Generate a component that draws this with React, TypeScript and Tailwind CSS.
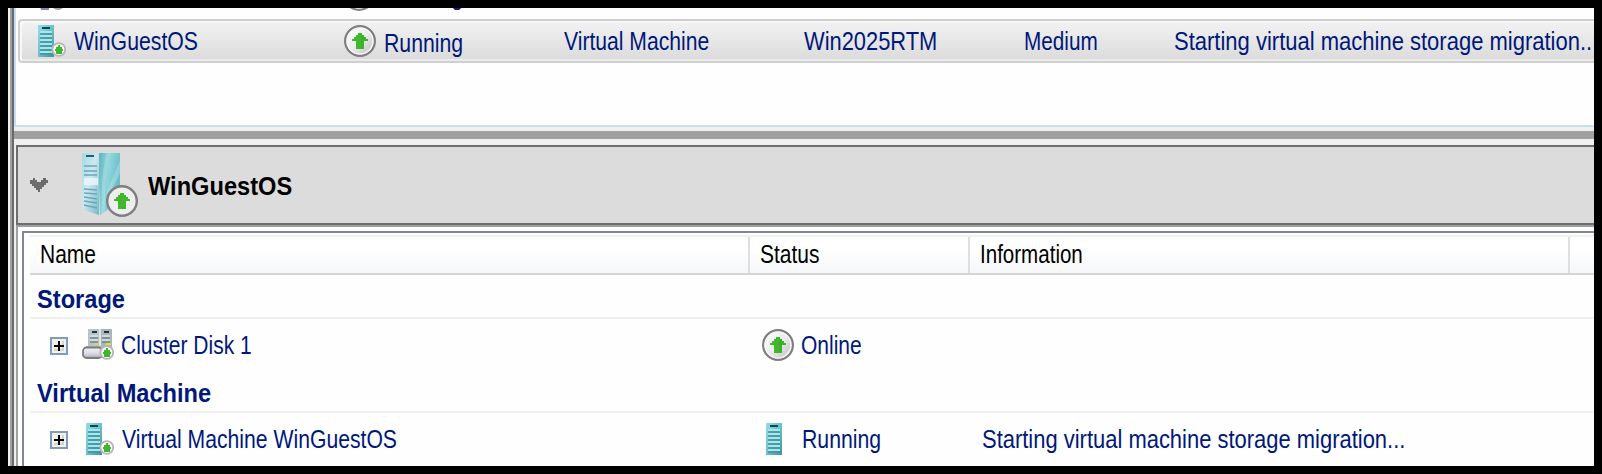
import type { ReactNode } from "react";

function Label({ children, className = "" }: { children: ReactNode; className?: string }) {
  return (
    <span className={`block origin-left whitespace-nowrap text-[25px] leading-[28px] ${className}`}>
      {children}
    </span>
  );
}

function UpBadge({ className = "" }: { className?: string }) {
  return (
    <svg viewBox="0 0 32 32" className={`size-8 shrink-0 ${className}`}>
      <defs>
        <linearGradient id="badge" x1="0" y1="0" x2="1" y2="1">
          <stop offset="0" stopColor="#ffffff" />
          <stop offset="0.5" stopColor="#ececec" />
          <stop offset="0.75" stopColor="#d2d2d2" />
          <stop offset="1" stopColor="#f4f4f4" />
        </linearGradient>
      </defs>
      <circle cx="16" cy="16" r="14.8" fill="url(#badge)" stroke="#7f7f7f" strokeWidth="2.4" />
      <circle cx="16" cy="16" r="13" fill="none" stroke="#f6f6f6" strokeWidth="1.4" />
      <path d="M14 8h4v2h2v2h2v2h2v2h-4v8h-8v-8H8v-2h2v-2h2v-2h2z" fill="#3fb92b" />
      <path d="M18 8v2h2v2h2v2h2v2h-4v8h-3V10z" fill="#35ae22" opacity="0.6" />
    </svg>
  );
}

function MiniBadge() {
  return (
    <g>
      <circle cx="20.8" cy="24.5" r="6.4" fill="#fcfcfc" stroke="#b6b6b6" strokeWidth="1.8" />
      <path d="M20 20h2v2h2v2h1v2h-1v3h-6v-3h-1v-2h1v-2h2z" fill="#3db82a" />
    </g>
  );
}

function ServerIcon({ badge = false }: { badge?: boolean }) {
  return (
    <svg viewBox="0 0 28 32" className="h-8 w-7 shrink-0">
      <defs>
        <linearGradient id="server" x1="0" y1="0" x2="1" y2="1">
          <stop offset="0" stopColor="#93dfe6" />
          <stop offset="0.55" stopColor="#68bdc7" />
          <stop offset="1" stopColor="#3c929e" />
        </linearGradient>
      </defs>
      <rect width="16" height="32" fill="url(#server)" />
      <rect x="4" y="2" width="8" height="2" fill="#10464f" />
      <path d="M2 7h12M2 11h12M2 15h12M2 19h12M2 23h12M2 27h12" stroke="#a9e6ea" strokeWidth="2" />
      <path d="M2 9h12M2 13h12M2 17h12M2 21h12M2 25h12M2 29h12" stroke="#3f93a0" strokeWidth="1.4" />
      {badge && <MiniBadge />}
    </svg>
  );
}

function DiskIcon() {
  return (
    <svg viewBox="0 0 32 32" className="size-8 shrink-0">
      <defs>
        <linearGradient id="drive" x1="0" y1="0" x2="0" y2="1">
          <stop offset="0" stopColor="#f4f4f8" />
          <stop offset="0.6" stopColor="#d9d9e3" />
          <stop offset="1" stopColor="#a9a9b2" />
        </linearGradient>
      </defs>
      <rect x="6" width="12" height="18" fill="#b9c4c9" />
      <rect x="18" width="12" height="18" fill="#a9b5ba" />
      <path d="M18 0v18" stroke="#dfe6e8" strokeWidth="2" />
      <path d="M10 3h5M22 3h5" stroke="#1d3540" strokeWidth="2" />
      <path d="M8 9h8M8 13h8M20 9h8M20 13h8" stroke="#75848b" strokeWidth="1.6" />
      <path d="M8 7h8M8 11h8M20 7h8M20 11h8" stroke="#dbe4e7" strokeWidth="1.6" />
      <path d="M13 15h3M24 15h5" stroke="#d4e43c" strokeWidth="2" />
      <path d="M4 17h24v12H4z" fill="#b5b5ba" />
      <rect x="1" y="18.5" width="19" height="10.5" rx="3.5" fill="url(#drive)" stroke="#7c7c81" strokeWidth="1.8" />
      <g transform="translate(4 -1)"><MiniBadge /></g>
    </svg>
  );
}

function BigServerIcon() {
  return (
    <svg viewBox="0 0 56 64" className="h-16 w-14 shrink-0">
      <defs>
        <linearGradient id="front" x1="0" y1="0" x2="1" y2="1">
          <stop offset="0" stopColor="#9fdce3" />
          <stop offset="0.45" stopColor="#cfe8ef" />
          <stop offset="1" stopColor="#70b9c7" />
        </linearGradient>
        <linearGradient id="side" x1="0" y1="0" x2="1" y2="0.4">
          <stop offset="0" stopColor="#5fb0bb" />
          <stop offset="0.5" stopColor="#8fd5dc" />
          <stop offset="1" stopColor="#68bcc7" />
        </linearGradient>
      </defs>
      <path d="M16 0h22v48L18 62z" fill="url(#side)" />
      <path d="M24 0h4l-5 30v28l-3 2V28z" fill="#b5e8ec" opacity="0.4" />
      <path d="M38 8L25 38v8l13-26z" fill="#c6eef1" opacity="0.35" />
      <path d="M0 0h17v62L0 56z" fill="url(#front)" />
      <path d="M4 3h8" stroke="#1d6370" strokeWidth="2" />
      <path d="M2 13h13M2 18h13M2 22h13M2 36l13 1M2 40l13 1M2 44l13 2M2 48l13 2M2 52l13 3" stroke="#6ba6bb" strokeWidth="1.6" />
      <path d="M2 25h14v7H2z" fill="#edf8fc" opacity="0.8" />
      <g transform="translate(24 32)">
        <circle cx="16" cy="16" r="14.8" fill="#eeeeef" stroke="#7f7f7f" strokeWidth="2.4" />
        <path d="M14 8h4v2h2v2h2v2h2v2h-4v8h-8v-8H8v-2h2v-2h2v-2h2z" fill="#3fb92b" />
      </g>
    </svg>
  );
}

function Expander() {
  return (
    <svg viewBox="0 0 18 18" className="size-[18px] shrink-0" shapeRendering="crispEdges">
      <rect x="1" y="1" width="16" height="16" fill="#f3f1ec" stroke="#7f9db9" strokeWidth="2" />
      <path d="M14 4v10H4v-2h8V4z" fill="#d8d3c8" />
      <path d="M4 9h10M9 4v10" stroke="#000" strokeWidth="2" />
    </svg>
  );
}

function ResourceHeader({ title }: { title: string }) {
  return (
    <div className="ml-[6px] h-full border-b-2 border-[#f0f0f0] pl-[7px] pt-[10px]">
      <Label className="scale-x-[0.945] font-bold text-[#00187a]">{title}</Label>
    </div>
  );
}

export default function App() {
  return (
    <div className="h-[474px] w-[1602px] overflow-hidden bg-black p-2 font-['Liberation_Sans',sans-serif] text-[#00187a]">
      <div className="flex h-[458px] w-[1586px] overflow-hidden bg-white">
        <div className="w-[6px] shrink-0 border-l-2 border-[#f0f0f0] bg-[linear-gradient(90deg,#a0a0a0_50%,#696969_50%)]" />
        <div className="flex w-[1580px] shrink-0 flex-col bg-[#f0f0f0]">
          <div className="flex h-[119px] shrink-0 flex-col border-b-2 border-l-2 border-[#c7e0f1] bg-[#fefefe] pl-[2px]">
            <div className="mb-[2px] flex h-[9px] shrink-0 items-end overflow-hidden">
              <div className="flex h-11 shrink-0">
                <div className="flex w-[325px] pl-[21px] pt-[5px]">
                  <svg viewBox="0 0 28 32" className="h-8 w-7">
                    <path d="M0 24h6v4h4v4H2z" fill="#7590a8" />
                    <circle cx="19" cy="25" r="6" fill="#f6f6f6" stroke="#a2a2a2" strokeWidth="2" />
                  </svg>
                </div>
                <div className="flex gap-[8px] pt-[6px]">
                  <UpBadge />
                  <Label className="scale-x-[0.86] pt-[3px]">Running</Label>
                </div>
              </div>
            </div>
            <div className="flex h-11 shrink-0 rounded-l-[4px] border-y-2 border-l-2 border-[#cfcfcf] bg-[linear-gradient(#f2f2f2,#dbdbdb)] shadow-[inset_2px_2px_0_#f8f8f8,inset_0_-2px_0_#ebebeb]">
              <div className="flex w-[324px] shrink-0 gap-[8px] pl-[18px] pt-1">
                <ServerIcon badge />
                <Label className="scale-x-[0.85] pt-[2px]">WinGuestOS</Label>
              </div>
              <div className="flex w-[220px] shrink-0 gap-[8px] pt-1">
                <UpBadge />
                <Label className="scale-x-[0.85] pt-[4px]">Running</Label>
              </div>
              <div className="w-[240px] shrink-0 pt-[6px]"><Label className="scale-x-[0.845]">Virtual Machine</Label></div>
              <div className="w-[220px] shrink-0 pt-[6px]"><Label className="scale-x-[0.875]">Win2025RTM</Label></div>
              <div className="w-[150px] shrink-0 pt-[6px]"><Label className="w-fit scale-x-[0.83]">Medium</Label></div>
              <div className="w-[421px] pt-[6px]"><Label className="w-[421px] scale-x-[0.88]">Starting virtual machine storage migration..</Label></div>
            </div>
          </div>
          <div className="mt-1 h-2 shrink-0 bg-[#a0a0a0]" />
          <div className="ml-[2px] mt-[6px] flex h-[80px] shrink-0 border-y-2 border-l-2 border-[#6e6e6e] bg-[#dcdcdc]">
            <svg viewBox="0 0 20 14" className="ml-[11px] mt-[31px] h-[14px] w-5"><path d="M4 0h2v2h2v2h4V2h2V0h3v2h2v3h-2v2h-2v2h-2v2h-2v3H9v-2H7v-2H5V8H3V6H1V2h3z" fill="#6c6c6c" /></svg>
            <div className="ml-[33px] mt-[6px] flex gap-[10px]">
              <BigServerIcon />
              <Label className="scale-x-[0.945] pt-[19px] font-bold text-black">WinGuestOS</Label>
            </div>
          </div>
          <div className="ml-[2px] flex h-[243px] shrink-0 border-l-2 border-t-2 border-[#a0a0a0] bg-[#fefefe] pl-1 pt-1">
            <div className="w-full border-l-2 border-t-2 border-[#828790] pt-[2px] text-black">
              <div className="ml-[6px] flex h-10 border-b-2 border-t-2 border-b-[#d5d5d5] border-t-[#f0f0f0] bg-[linear-gradient(#fff,#fff_35%,#f6f7f9)]">
                <div className="w-[720px] shrink-0 border-r-2 border-[#dedfe0] pl-[10px] pt-[3px]"><Label className="scale-x-[0.84]">Name</Label></div>
                <div className="w-[220px] shrink-0 border-r-2 border-[#dedfe0] pl-[10px] pt-[3px]"><Label className="scale-x-[0.84]">Status</Label></div>
                <div className="w-[600px] shrink-0 border-r-2 border-[#dedfe0] pl-[10px] pt-[3px]"><Label className="scale-x-[0.822]">Information</Label></div>
              </div>
              <div className="h-11"><ResourceHeader title="Storage" /></div>
              <div className="flex h-[50px] text-[#00187a]">
                <div className="flex w-[738px] shrink-0 pl-[26px] pt-[10px]">
                  <div className="pt-2"><Expander /></div>
                  <div className="ml-[14px]"><DiskIcon /></div>
                  <Label className="ml-[7px] scale-x-[0.84] pt-[2px]">Cluster Disk 1</Label>
                </div>
                <div className="flex gap-[7px] pt-[10px]"><UpBadge /><Label className="scale-x-[0.84] pt-[2px]">Online</Label></div>
              </div>
              <div className="h-11"><ResourceHeader title="Virtual Machine" /></div>
              <div className="flex h-[50px] text-[#00187a]">
                <div className="flex w-[742px] shrink-0 pl-[26px] pt-[10px]">
                  <div className="pt-2"><Expander /></div>
                  <div className="ml-[18px]"><ServerIcon badge /></div>
                  <Label className="ml-[8px] scale-x-[0.847] pt-[2px]">Virtual Machine WinGuestOS</Label>
                </div>
                <div className="flex w-[216px] shrink-0 gap-[8px] pt-[10px]"><ServerIcon /><Label className="scale-x-[0.85] pt-[2px]">Running</Label></div>
                <Label className="scale-x-[0.878] pt-[12px]">Starting virtual machine storage migration...</Label>
              </div>
            </div>
          </div>
        </div>
      </div>
    </div>
  );
}
